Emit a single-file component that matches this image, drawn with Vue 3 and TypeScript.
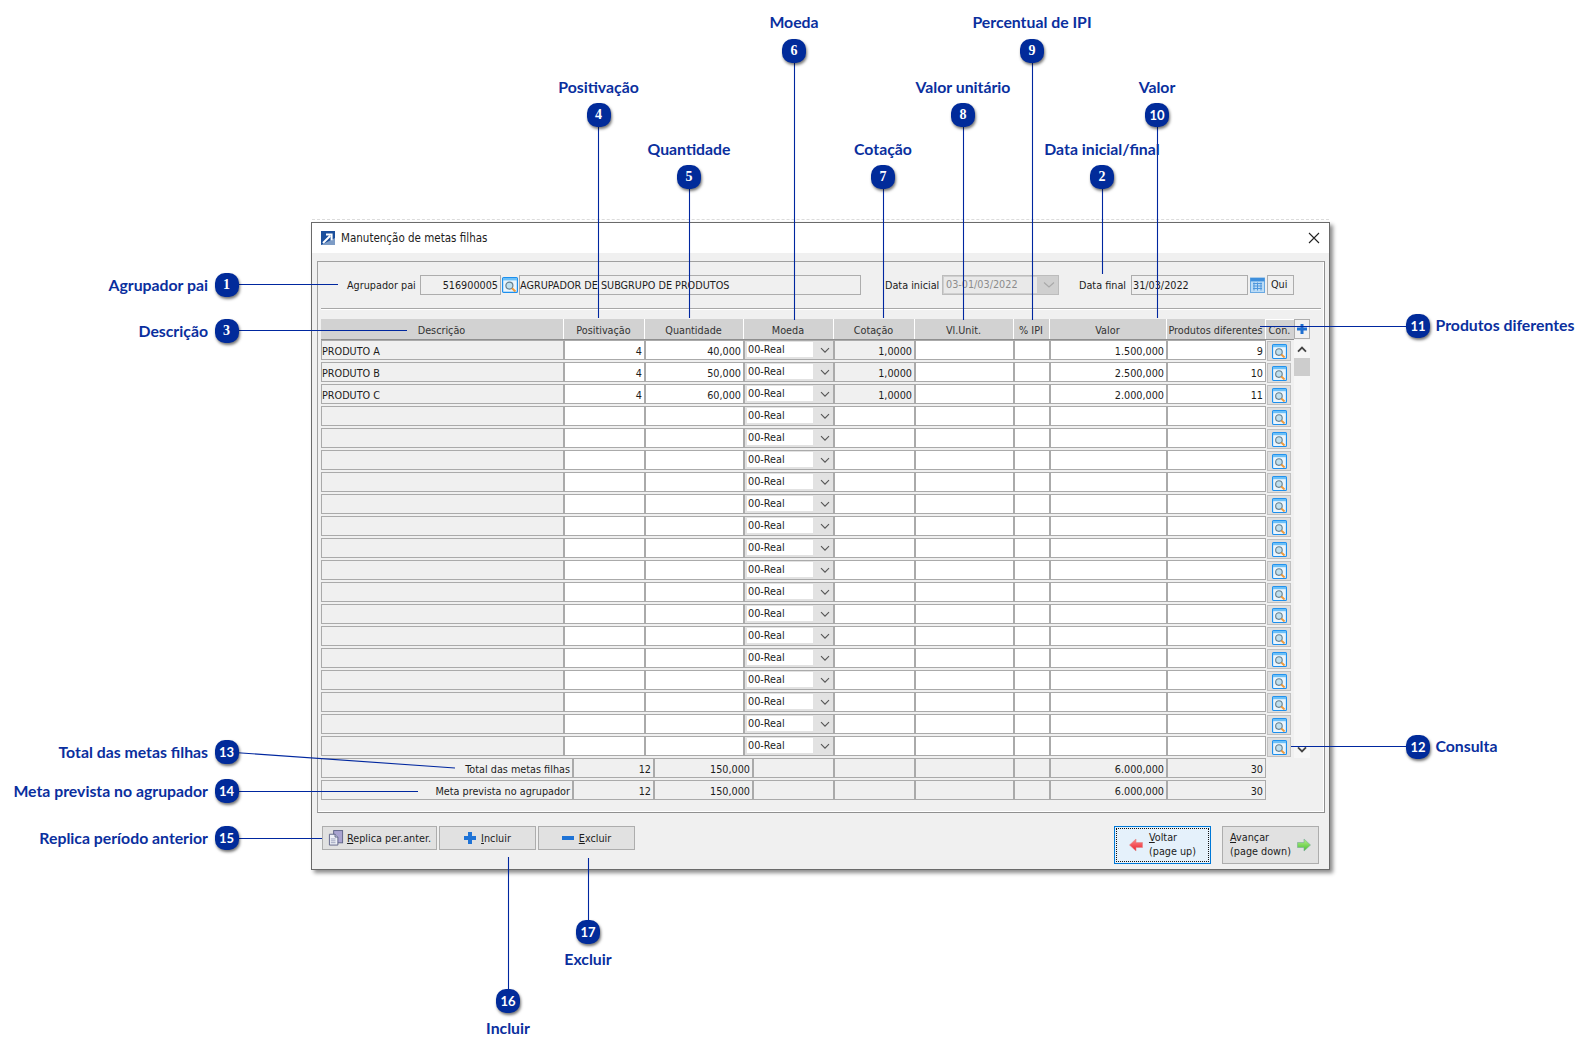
<script setup lang="ts">
interface Callout {
  n: number
  x: number
  y: number
  label: string
  side: 'left' | 'right' | 'top' | 'bottom'
  labelY?: number
}

interface Row {
  desc: string
  pos: string
  qty: string
  cot: string
  valor: string
  prod: string
}

const callouts: Callout[] = [
  { n: 1, x: 226.5, y: 284.5, label: 'Agrupador pai', side: 'left' },
  { n: 2, x: 1102, y: 177, label: 'Data inicial/final', side: 'top', labelY: 149 },
  { n: 3, x: 226.5, y: 330.5, label: 'Descrição', side: 'left' },
  { n: 4, x: 598.5, y: 115, label: 'Positivação', side: 'top', labelY: 87 },
  { n: 5, x: 689, y: 177, label: 'Quantidade', side: 'top', labelY: 149 },
  { n: 6, x: 794, y: 50.5, label: 'Moeda', side: 'top', labelY: 22 },
  { n: 7, x: 883, y: 177, label: 'Cotação', side: 'top', labelY: 149 },
  { n: 8, x: 963, y: 115, label: 'Valor unitário', side: 'top', labelY: 87 },
  { n: 9, x: 1032, y: 50.5, label: 'Percentual de IPI', side: 'top', labelY: 22 },
  { n: 10, x: 1157, y: 115, label: 'Valor', side: 'top', labelY: 87 },
  { n: 11, x: 1418, y: 326, label: 'Produtos diferentes', side: 'right' },
  { n: 12, x: 1418, y: 747, label: 'Consulta', side: 'right' },
  { n: 13, x: 226.5, y: 751.5, label: 'Total das metas filhas', side: 'left' },
  { n: 14, x: 226.5, y: 791, label: 'Meta prevista no agrupador', side: 'left' },
  { n: 15, x: 226.5, y: 838, label: 'Replica período anterior', side: 'left' },
  { n: 16, x: 508, y: 1001, label: 'Incluir', side: 'bottom', labelY: 1028 },
  { n: 17, x: 588, y: 932, label: 'Excluir', side: 'bottom', labelY: 959 },
]

const lines: [number, number, number, number][] = [
  [227, 284.5, 338, 284.5],
  [1102.5, 177, 1102.5, 274],
  [227, 330.5, 407, 330.5],
  [598.5, 115, 598.5, 318],
  [689.5, 177, 689.5, 318],
  [794.5, 50, 794.5, 320],
  [883.5, 177, 883.5, 318],
  [963.5, 115, 963.5, 320],
  [1032.5, 50, 1032.5, 320],
  [1157.5, 115, 1157.5, 318],
  [1260, 326.5, 1418, 326.5],
  [1291, 746.5, 1418, 746.5],
  [227, 752, 455, 768],
  [227, 791.5, 418, 791.5],
  [227, 838.5, 322, 838.5],
  [508.5, 857, 508.5, 1001],
  [588.5, 858, 588.5, 932],
]

function badgeStyle(c: Callout) {
  return { left: `${c.x - 12}px`, top: `${c.y - 12}px` }
}

function labelStyle(c: Callout) {
  if (c.side === 'left') return { right: `${1592 - 208}px`, top: `${Math.round(c.y) - 13}px` }
  if (c.side === 'right') return { left: '1435.5px', top: `${c.y - 12}px` }
  return { left: `${c.x - 100}px`, width: '200px', top: `${(c.labelY ?? 0) - 11}px` }
}

const headers = [
  'Descrição',
  'Positivação',
  'Quantidade',
  'Moeda',
  'Cotação',
  'Vl.Unit.',
  '% IPI',
  'Valor',
  'Produtos diferentes',
  'Con.',
]

const filled: Row[] = [
  { desc: 'PRODUTO A', pos: '4', qty: '40,000', cot: '1,0000', valor: '1.500,000', prod: '9' },
  { desc: 'PRODUTO B', pos: '4', qty: '50,000', cot: '1,0000', valor: '2.500,000', prod: '10' },
  { desc: 'PRODUTO C', pos: '4', qty: '60,000', cot: '1,0000', valor: '2.000,000', prod: '11' },
]
const blank: Row = { desc: '', pos: '', qty: '', cot: '', valor: '', prod: '' }
const rows: Row[] = [...filled, ...Array.from({ length: 16 }, () => blank)]

const totals = [
  { label: 'Total das metas filhas', pos: '12', qty: '150,000', valor: '6.000,000', prod: '30' },
  { label: 'Meta prevista no agrupador', pos: '12', qty: '150,000', valor: '6.000,000', prod: '30' },
]
</script>

<template>
  <div class="canvas">
    <svg width="0" height="0" class="defs">
      <symbol id="lookup" viewBox="0 0 16 16">
        <rect x="0.6" y="0.6" width="14.8" height="14.8" rx="1" fill="#eaf5fd" stroke="#1c8fee" stroke-width="1.2" />
        <rect x="1" y="1" width="14" height="2.4" fill="#6cc0f7" />
        <circle cx="7.4" cy="8.6" r="3.5" fill="#bfe0ef" stroke="#68808f" stroke-width="1.2" />
        <path d="M10 11.2 13.4 14.4" stroke="#ee9a3c" stroke-width="2" />
      </symbol>
      <linearGradient id="red" x1="0" y1="0" x2="0" y2="1">
        <stop offset="0" stop-color="#ff8a8a" />
        <stop offset="1" stop-color="#e8202c" />
      </linearGradient>
      <linearGradient id="green" x1="0" y1="0" x2="0" y2="1">
        <stop offset="0" stop-color="#b8f08c" />
        <stop offset="1" stop-color="#48c02c" />
      </linearGradient>
    </svg>

    <section class="window">
      <header class="titlebar">
        <svg class="title-icon" width="14" height="14" viewBox="0 0 14 14">
          <rect width="14" height="14" fill="#1b4f9c" />
          <path d="M0 14 14 14 14 7Z" fill="#7d9cc6" />
          <path d="M2 12 9 5M5 3.6h5.6v5.6" fill="none" stroke="#fff" stroke-width="2" />
        </svg>
        <span class="title">Manutenção de metas filhas</span>
        <svg class="close" width="12" height="12" viewBox="0 0 12 12">
          <path d="M1 1 11 11M11 1 1 11" stroke="#222" stroke-width="1.1" />
        </svg>
      </header>

      <div class="body">
        <div class="panel">
          <div class="filters">
            <span class="lbl lbl-pai">Agrupador pai</span>
            <span class="field code">516900005</span>
            <svg class="ico-lookup" width="16" height="16"><use href="#lookup" /></svg>
            <span class="field desc-field">AGRUPADOR DE SUBGRUPO DE PRODUTOS</span>
            <span class="lbl lbl-ini">Data inicial</span>
            <span class="combo-disabled">
              <span class="combo-value">03-01/03/2022</span>
              <svg width="12" height="8" viewBox="0 0 12 8"><path d="M1 1.5 6 6 11 1.5" fill="none" stroke="#a9a9a9" stroke-width="1.2" /></svg>
            </span>
            <span class="lbl lbl-fim">Data final</span>
            <span class="field date">31/03/2022</span>
            <svg class="calendar" width="15" height="16" viewBox="0 0 15 16">
              <rect x="0.5" y="1" width="14" height="14.5" fill="#bcdcf6" stroke="#6aa9e2" />
              <rect x="0.5" y="1" width="14" height="3.4" fill="#3f8fdc" />
              <path d="M3 6.5h9M3 9h9M3 11.5h9M4 5.5v8M7.5 5.5v8M11 5.5v8" stroke="#4f97dd" stroke-width="1" />
            </svg>
            <span class="qui">Qui</span>
          </div>
          <div class="separator"></div>

          <div class="head-line">
            <div class="cols head">
              <div v-for="h in headers" :key="h" class="th">{{ h }}</div>
            </div>
            <div class="plus-btn">
              <svg width="10" height="10" viewBox="0 0 10 10"><path d="M3.5 0h3v3.5H10v3H6.5V10h-3V6.5H0v-3h3.5Z" fill="#1f6fd0" /></svg>
            </div>
          </div>

          <div class="table-body">
            <div class="rows">
              <div v-for="(r, i) in rows" :key="i" class="cols">
                <div class="td ro left">{{ r.desc }}</div>
                <div class="td">{{ r.pos }}</div>
                <div class="td">{{ r.qty }}</div>
                <div class="td combo">
                  <span class="combo-field">00-Real</span>
                  <svg width="10" height="7" viewBox="0 0 10 7"><path d="M1 1.2 5 5.2 9 1.2" fill="none" stroke="#555" stroke-width="1.1" /></svg>
                </div>
                <div class="td" :class="{ ro: r.cot }">{{ r.cot }}</div>
                <div class="td"></div>
                <div class="td"></div>
                <div class="td">{{ r.valor }}</div>
                <div class="td">{{ r.prod }}</div>
                <div class="con-cell">
                  <svg width="15" height="15"><use href="#lookup" /></svg>
                </div>
              </div>
            </div>
            <div class="scrollbar">
              <svg class="chev-up" width="10" height="7" viewBox="0 0 10 7"><path d="M1 5.6 5 1.6 9 5.6" fill="none" stroke="#444" stroke-width="1.8" /></svg>
              <div class="thumb"></div>
              <svg class="chev-down" width="10" height="7" viewBox="0 0 10 7"><path d="M1 1.4 5 5.4 9 1.4" fill="none" stroke="#444" stroke-width="1.8" /></svg>
            </div>
          </div>

          <div class="totals">
            <div v-for="t in totals" :key="t.label" class="totals-row">
              <div class="td ro">{{ t.label }}</div>
              <div class="td ro">{{ t.pos }}</div>
              <div class="td ro">{{ t.qty }}</div>
              <div class="td ro"></div>
              <div class="td ro"></div>
              <div class="td ro"></div>
              <div class="td ro"></div>
              <div class="td ro">{{ t.valor }}</div>
              <div class="td ro">{{ t.prod }}</div>
            </div>
          </div>
        </div>

        <footer class="actions">
          <div class="group">
            <button class="btn replica">
              <svg width="16" height="16" viewBox="0 0 17 17">
                <rect x="6" y="0.6" width="9.5" height="13" fill="#a9a3d0" stroke="#5f6488" />
                <path d="M1.5 4.5h6l3 3v8.5h-9Z" fill="#eef0f6" stroke="#5f6488" />
                <path d="M7.5 4.5v3h3" fill="#c6cbe0" stroke="#5f6488" />
                <path d="M3 9.5h5M3 11.5h5M3 13.5h5" stroke="#9aa0bb" />
              </svg>
              <span><u>R</u>eplica per.anter.</span>
            </button>
            <button class="btn small">
              <svg width="12" height="12" viewBox="0 0 12 12"><path d="M4 0h4v4h4v4H8v4H4V8H0V4h4Z" fill="#1f73d6" /></svg>
              <span><u>I</u>ncluir</span>
            </button>
            <button class="btn small">
              <svg width="12" height="4" viewBox="0 0 12 4"><rect width="12" height="4" fill="#1f73d6" /></svg>
              <span><u>E</u>xcluir</span>
            </button>
          </div>
          <div class="group nav">
            <button class="btn big focused">
              <span class="dots"></span>
              <svg width="14" height="14" viewBox="0 0 14 14"><path d="M7 1V4.5H13.5V9.5H7V13L0.5 7Z" fill="url(#red)" stroke="#d88" stroke-width=".6" /></svg>
              <span class="two"><span><u>V</u>oltar</span><span>(page up)</span></span>
            </button>
            <button class="btn big">
              <span class="two"><span><u>A</u>vançar</span><span>(page down)</span></span>
              <svg width="14" height="14" viewBox="0 0 14 14"><path d="M7 1V4.5H.5V9.5H7V13L13.5 7Z" fill="url(#green)" stroke="#7a9" stroke-width=".6" /></svg>
            </button>
          </div>
        </footer>
      </div>
    </section>

    <svg class="connectors" width="1592" height="1055">
      <line v-for="(l, i) in lines" :key="i" :x1="l[0]" :y1="l[1]" :x2="l[2]" :y2="l[3]" />
    </svg>

    <template v-for="c in callouts" :key="c.n">
      <div class="badge" :class="{ serif: c.n < 10 }" :style="badgeStyle(c)">{{ c.n }}</div>
      <div class="callout-label" :class="c.side" :style="labelStyle(c)">{{ c.label }}</div>
    </template>
  </div>
</template>

<style scoped>
.canvas {
  position: relative;
  width: 1592px;
  height: 1055px;
  overflow: hidden;
  background: #fff;
  font-family: "DejaVu Sans", "Liberation Sans", sans-serif;
  font-stretch: condensed;
  font-size: 10.75px;
  color: #1c1c1c;
}
.defs {
  position: absolute;
}

/* window */
.window {
  position: absolute;
  left: 311px;
  top: 222px;
  width: 1019px;
  height: 648px;
  box-sizing: border-box;
  display: flex;
  flex-direction: column;
  background: #f0f0f0;
  border: 1px solid #6a6a6a;
  box-shadow: 3px 3px 4px rgba(0, 0, 0, 0.45);
}
.window::before {
  content: "";
  position: absolute;
  left: 0;
  right: 0;
  top: -4px;
  border-top: 1px dashed #dcdcdc;
}
.titlebar {
  height: 30px;
  flex: none;
  display: flex;
  align-items: center;
  background: #fff;
  padding: 0 9px;
}
.title-icon {
  margin-right: 6px;
}
.title {
  font-size: 11.5px;
  flex: 1;
}
.body {
  flex: 1;
  display: flex;
  flex-direction: column;
  padding: 8px 4px 0 5px;
}

/* panel */
.panel {
  height: 552px;
  box-sizing: border-box;
  border: 1px solid #a0a0a0;
  border-right-color: #909090;
  border-bottom-color: #909090;
  box-shadow: inset -1px -1px 0 #fff;
  padding: 13px 0 0 3px;
  display: flex;
  flex-direction: column;
}
.filters {
  display: flex;
  align-items: center;
  height: 20px;
  flex: none;
}
.lbl {
  white-space: nowrap;
}
.lbl-pai {
  margin-left: 26px;
  width: 73px;
}
.field {
  height: 20px;
  box-sizing: border-box;
  border: 1px solid #adadad;
  display: flex;
  align-items: center;
  white-space: nowrap;
}
.code {
  width: 81px;
  justify-content: flex-end;
  padding-right: 2px;
}
.ico-lookup {
  margin: 0 1px 0 1px;
}
.desc-field {
  width: 342px;
  padding-left: 0;
}
.lbl-ini {
  margin-left: 24px;
  width: 57px;
}
.combo-disabled {
  width: 117px;
  height: 20px;
  box-sizing: border-box;
  border: 1px solid #bcbcbc;
  background: #cfcfcf;
  display: flex;
  align-items: center;
  color: #8c8c8c;
}
.combo-value {
  width: 93px;
  height: 16px;
  margin-left: 1px;
  padding-left: 2px;
  box-sizing: border-box;
  background: #e9e9e9;
  line-height: 15px;
}
.combo-disabled svg {
  margin-left: 6px;
}
.lbl-fim {
  margin-left: 20px;
  width: 52px;
}
.date {
  width: 117px;
  padding-left: 1px;
}
.calendar {
  margin: 0 2px;
}
.qui {
  width: 27px;
  height: 20px;
  box-sizing: border-box;
  border: 1px solid #adadad;
  padding-left: 3px;
  line-height: 18px;
}
.separator {
  flex: none;
  height: 1px;
  margin: 13px 3px 10px 0;
  background: #a8a8a8;
  box-shadow: 0 1px 0 #fff;
}

/* table */
.head-line {
  display: flex;
  flex: none;
  height: 21px;
}
.cols {
  display: grid;
  grid-template-columns: 243px 81px 99px 90px 81px 99px 36px 117px 99px 28px;
  height: 20px;
}
.head {
  height: 20px;
  background: #d2d2d2;
  border-bottom: 1px solid #8f8f8f;
}
.th {
  display: flex;
  align-items: center;
  justify-content: center;
  border-right: 1px solid #fff;
  padding: 2px 1px 0 0;
  white-space: nowrap;
  color: #333;
}
.th:last-child {
  border-right: 0;
  border-top: 1px solid #fff;
  padding-top: 1px;
}
.plus-btn {
  width: 16px;
  height: 20px;
  box-sizing: border-box;
  border: 1px solid #adadad;
  display: flex;
  align-items: center;
  justify-content: center;
}
.table-body {
  display: flex;
  flex: none;
}
.rows {
  display: flex;
  flex-direction: column;
  gap: 2px;
  margin-bottom: 2px;
}
.td {
  height: 20px;
  box-sizing: border-box;
  border: 1px solid #aaa;
  background: #fff;
  display: flex;
  align-items: center;
  justify-content: flex-end;
  padding: 2px 2px 0 0;
  white-space: nowrap;
  overflow: hidden;
}
.ro {
  background: #f0f0f0;
}
.left {
  justify-content: flex-start;
  padding: 2px 0 0;
}
.combo {
  background: #e2e2e2;
  padding: 0;
  justify-content: flex-start;
}
.combo-field {
  width: 66px;
  height: 15px;
  margin: -2px 0 0 2px;
  padding-left: 1px;
  box-sizing: border-box;
  background: #fff;
  line-height: 16px;
}
.combo svg {
  margin-left: 7px;
}
.con-cell {
  width: 24px;
  height: 20px;
  margin-left: 1px;
  box-sizing: border-box;
  border: 1px solid #c0c0c0;
  background: #dedede;
  display: flex;
  align-items: center;
  justify-content: center;
  transform: translateY(1px);
}
.scrollbar {
  width: 16px;
  background: #f6f6f6;
  display: flex;
  flex-direction: column;
  align-items: center;
}
.chev-up {
  margin-top: 6px;
  flex: none;
}
.thumb {
  width: 16px;
  height: 18px;
  margin-top: 5px;
  background: #cdcdcd;
  flex: none;
}
.chev-down {
  margin-top: auto;
  margin-bottom: 5px;
  flex: none;
}
.totals {
  display: flex;
  flex-direction: column;
  gap: 2px;
}
.totals-row {
  display: grid;
  grid-template-columns: 252px 81px 99px 81px 81px 99px 36px 117px 99px;
  height: 20px;
}

/* footer */
.actions {
  display: flex;
  justify-content: space-between;
  margin-top: 13px;
  padding: 0 6px 0 5px;
}
.group {
  display: flex;
  gap: 2px;
  align-items: flex-start;
}
.nav {
  gap: 11px;
}
.btn {
  font: inherit;
  color: #1c1c1c;
  height: 24px;
  box-sizing: border-box;
  border: 1px solid #adadad;
  background: #e1e1e1;
  padding: 0;
  display: flex;
  align-items: center;
  justify-content: center;
  position: relative;
}
.replica {
  width: 115px;
  gap: 3px;
}
.small {
  width: 97px;
  gap: 5px;
}
.big {
  width: 97px;
  height: 38px;
  gap: 6px;
}
.focused {
  background: #e5f1fb;
  border-color: #0078d7;
}
.dots {
  position: absolute;
  inset: 1px;
  border: 1px dotted #111;
}
.two {
  display: flex;
  flex-direction: column;
  align-items: flex-start;
  line-height: 14px;
}

/* callouts */
.connectors {
  position: absolute;
  left: 0;
  top: 0;
  pointer-events: none;
}
.connectors line {
  stroke: #00279f;
  stroke-width: 1.1;
}
.badge {
  position: absolute;
  width: 24px;
  height: 24px;
  border-radius: 10px;
  background: #012b9a;
  box-shadow: 1px 2px 3px rgba(0, 0, 0, 0.55);
  color: #fff;
  font-family: "Lato", sans-serif;
  font-weight: 700;
  font-size: 13px;
  font-stretch: normal;
  line-height: 24px;
  text-align: center;
}
.badge.serif {
  font-family: "Liberation Serif", serif;
  font-size: 14px;
}
.callout-label {
  position: absolute;
  height: 22px;
  line-height: 22px;
  font-family: "Lato", sans-serif;
  font-stretch: normal;
  font-weight: 700;
  font-size: 15.8px;
  color: #0a2f9e;
  white-space: nowrap;
}
.callout-label.top,
.callout-label.bottom {
  text-align: center;
}
</style>
